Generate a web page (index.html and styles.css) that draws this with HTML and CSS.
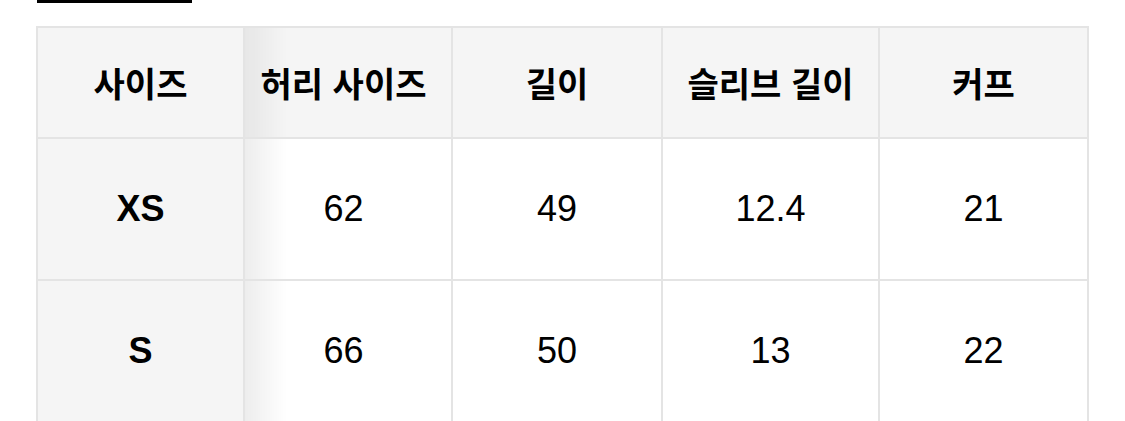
FILE: index.html
```html
<!DOCTYPE html>
<html lang="ko">
<head>
<meta charset="utf-8">
<link rel="stylesheet" href="styles.css">
</head>
<body>
<div class="page">
  <div class="tab-bar"></div>
  <table class="size-table">
    <colgroup>
      <col class="c1"><col class="c2"><col class="c3"><col class="c4"><col class="c5">
    </colgroup>
    <thead>
      <tr class="head-row">
        <th class="sticky">사이즈</th>
        <th class="shadowed">허리 사이즈</th>
        <th>길이</th>
        <th>슬리브 길이</th>
        <th>커프</th>
      </tr>
    </thead>
    <tbody>
      <tr class="data-row">
        <th class="sticky">XS</th>
        <td class="shadowed">62</td>
        <td>49</td>
        <td>12.4</td>
        <td>21</td>
      </tr>
      <tr class="data-row">
        <th class="sticky">S</th>
        <td class="shadowed">66</td>
        <td>50</td>
        <td>13</td>
        <td>22</td>
      </tr>
    </tbody>
  </table>
</div>
</body>
</html>
```
FILE: styles.css
```css
html, body {
  margin: 0;
  padding: 0;
  background: #ffffff;
}

.page {
  padding-left: 37px;
  font-family: "Liberation Sans", "Noto Sans CJK KR", Arial, sans-serif;
  color: #000;
}

.tab-bar {
  width: 155px;
  height: 3px;
  background: #000;
}

.size-table {
  margin-top: 23px;
  margin-left: -1px;
  border-collapse: collapse;
  table-layout: fixed;
  width: 1053px;
}

.c1 { width: 207px; }
.c2 { width: 208px; }
.c3 { width: 210px; }
.c4 { width: 217px; }
.c5 { width: 209px; }

.size-table th,
.size-table td {
  border: 2px solid #e4e4e4;
  text-align: center;
  vertical-align: middle;
  padding: 0;
  font-size: 36px;
  line-height: 1;
}

.size-table thead th {
  background: #f5f5f5;
  font-family: "Noto Sans CJK KR", "Liberation Sans", sans-serif;
  font-weight: 700;
  font-size: 34px;
}

.size-table tbody th {
  font-weight: 700;
}

.size-table td {
  font-weight: 400;
  background: #ffffff;
}

.head-row { height: 111px; }
.data-row { height: 142px; }

.sticky {
  background: #f5f5f5;
}

.size-table .shadowed {
  padding-right: 9px;
}

.size-table td.shadowed {
  background: linear-gradient(to right, rgba(0,0,0,0.07), rgba(0,0,0,0) 42px), #ffffff;
}

.size-table thead th.shadowed {
  background: linear-gradient(to right, rgba(0,0,0,0.06), rgba(0,0,0,0) 42px), #f5f5f5;
}
```
